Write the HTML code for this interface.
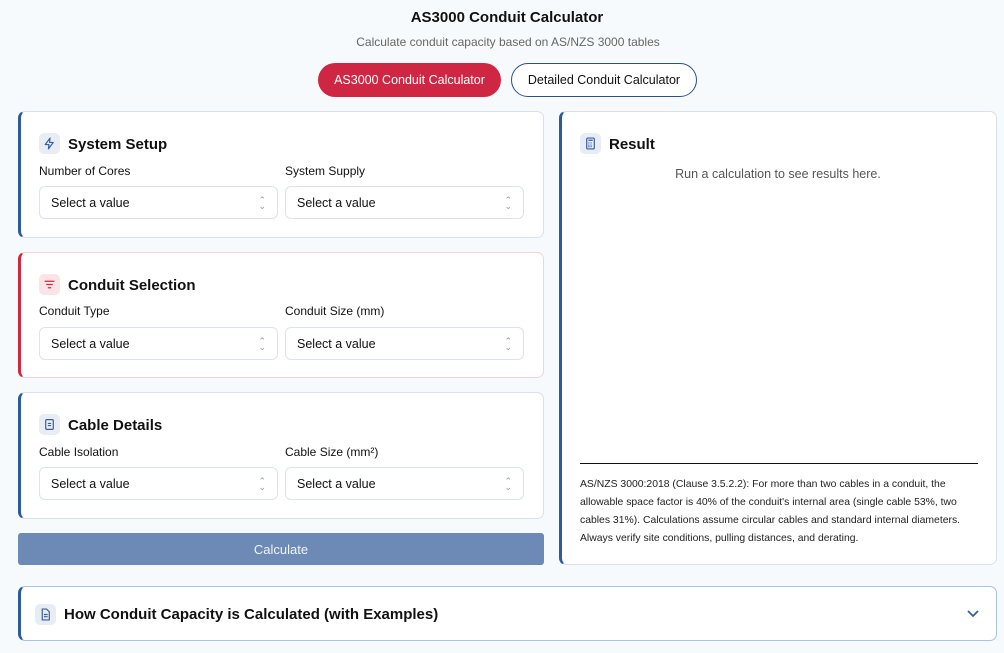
<!DOCTYPE html>
<html><head><meta charset="utf-8"><style>
*{box-sizing:border-box;margin:0;padding:0}
body{width:1004px;height:653px;background:#f7fafd;font-family:"Liberation Sans",sans-serif;color:#111;position:relative;overflow:hidden}
.abs{position:absolute}
h1{position:absolute;top:9px;left:0;width:1014px;text-align:center;font-size:15px;font-weight:bold}
.sub{position:absolute;top:35px;left:0;width:1016px;text-align:center;font-size:12px;color:#666}
.btn{position:absolute;top:63px;height:34px;border-radius:17px;font-size:12.5px;display:flex;align-items:center;justify-content:center}
.card{position:absolute;background:#fff;border:1px solid #d8e0ec;border-radius:7px;border-left:3px solid #2d5a9b}
.ic{position:absolute;width:21px;height:21px;border-radius:5px;background:#e8edf5;display:flex;align-items:center;justify-content:center}
.tt{position:absolute;font-size:15px;font-weight:bold}
.lb{position:absolute;font-size:12px}
.sel{position:absolute;height:33px;border:1px solid #dde3ec;border-radius:6px;font-size:12.5px;padding:0 11px;display:flex;align-items:center;justify-content:space-between;background:#fff}
.sel span.a{color:#999;font-size:9px;line-height:6px;text-align:center}
</style></head><body>
<h1>AS3000 Conduit Calculator</h1>
<div class="sub">Calculate conduit capacity based on AS/NZS 3000 tables</div>
<div class="btn" style="left:318px;width:183px;background:#cf2743;color:#fff">AS3000 Conduit Calculator</div>
<div class="btn" style="left:511px;width:186px;background:#fff;border:1px solid #2d4f86;color:#111">Detailed Conduit Calculator</div>

<div class="card" style="left:18px;top:111px;width:526px;height:127px"></div>
<div class="ic" style="left:39px;top:133px"><svg width="13" height="13" viewBox="0 0 24 24" fill="none" stroke="#3a5f9e" stroke-width="2.2" stroke-linejoin="round"><path d="M13 2L4 14h7l-1 8 9-12h-7z"/></svg></div>
<div class="tt" style="left:68px;top:136px">System Setup</div>
<div class="lb" style="left:39px;top:164px">Number of Cores</div>
<div class="lb" style="left:285px;top:164px">System Supply</div>
<div class="sel" style="left:39px;top:186px;width:239px">Select a value<span class="a">⌃<br>⌄</span></div>
<div class="sel" style="left:285px;top:186px;width:239px">Select a value<span class="a">⌃<br>⌄</span></div>

<div class="card" style="left:18px;top:252px;width:526px;height:126px;border-color:#f2d3d8;border-left-color:#d0293f"></div>
<div class="ic" style="left:39px;top:274px;background:#fbe4e7"><svg width="13" height="13" viewBox="0 0 24 24" stroke="#d0293f" stroke-width="2.5"><path d="M3 6h18M6 12h12M9 18h6"/></svg></div>
<div class="tt" style="left:68px;top:277px">Conduit Selection</div>
<div class="lb" style="left:39px;top:304px">Conduit Type</div>
<div class="lb" style="left:285px;top:304px">Conduit Size (mm)</div>
<div class="sel" style="left:39px;top:327px;width:239px">Select a value<span class="a">⌃<br>⌄</span></div>
<div class="sel" style="left:285px;top:327px;width:239px">Select a value<span class="a">⌃<br>⌄</span></div>

<div class="card" style="left:18px;top:392px;width:526px;height:127px"></div>
<div class="ic" style="left:39px;top:414px"><svg width="13" height="13" viewBox="0 0 24 24" fill="none" stroke="#3a5f9e" stroke-width="2.2"><rect x="5" y="3" width="14" height="18" rx="2"/><path d="M9 10h6M9 14h6"/></svg></div>
<div class="tt" style="left:68px;top:417px">Cable Details</div>
<div class="lb" style="left:39px;top:445px">Cable Isolation</div>
<div class="lb" style="left:285px;top:445px">Cable Size (mm²)</div>
<div class="sel" style="left:39px;top:467px;width:239px">Select a value<span class="a">⌃<br>⌄</span></div>
<div class="sel" style="left:285px;top:467px;width:239px">Select a value<span class="a">⌃<br>⌄</span></div>

<div class="abs" style="left:18px;top:533px;width:526px;height:32px;background:#6c8ab5;border-radius:3px;color:#f0f3f8;font-size:13px;display:flex;align-items:center;justify-content:center">Calculate</div>

<div class="card" style="left:559px;top:111px;width:438px;height:454px"></div>
<div class="ic" style="left:580px;top:133px"><svg width="13" height="13" viewBox="0 0 24 24" fill="none" stroke="#3a5f9e" stroke-width="2.2"><rect x="5" y="2" width="14" height="20" rx="2"/><path d="M8 6h8M8 11h2M12 11h2M8 15h2M12 15h2M8 18h2M12 18h2"/></svg></div>
<div class="tt" style="left:609px;top:136px">Result</div>
<div class="abs" style="left:562px;top:167px;width:432px;text-align:center;font-size:12.5px;color:#555">Run a calculation to see results here.</div>
<div class="abs" style="left:580px;top:463px;width:398px;height:1px;background:#111"></div>
<div class="abs" style="left:580px;top:476px;width:400px;font-size:10.4px;line-height:18px;color:#222">AS/NZS 3000:2018 (Clause 3.5.2.2): For more than two cables in a conduit, the allowable space factor is 40% of the conduit's internal area (single cable 53%, two cables 31%). Calculations assume circular cables and standard internal diameters. Always verify site conditions, pulling distances, and derating.</div>

<div class="card" style="left:18px;top:586px;width:979px;height:55px;border-color:#a9c2e6;border-left-color:#2d5a9b"></div>
<div class="ic" style="left:35px;top:604px"><svg width="13" height="13" viewBox="0 0 24 24" fill="none" stroke="#3a5f9e" stroke-width="2.2"><path d="M6 2h8l5 5v15H6z"/><path d="M9 12h7M9 16h7"/></svg></div>
<div class="tt" style="left:64px;top:606px">How Conduit Capacity is Calculated (with Examples)</div>
<svg class="abs" style="left:966px;top:609px" width="14" height="10" viewBox="0 0 14 10"><path d="M2 2l5 5 5-5" fill="none" stroke="#3a5f9e" stroke-width="1.8"/></svg>
</body></html>
